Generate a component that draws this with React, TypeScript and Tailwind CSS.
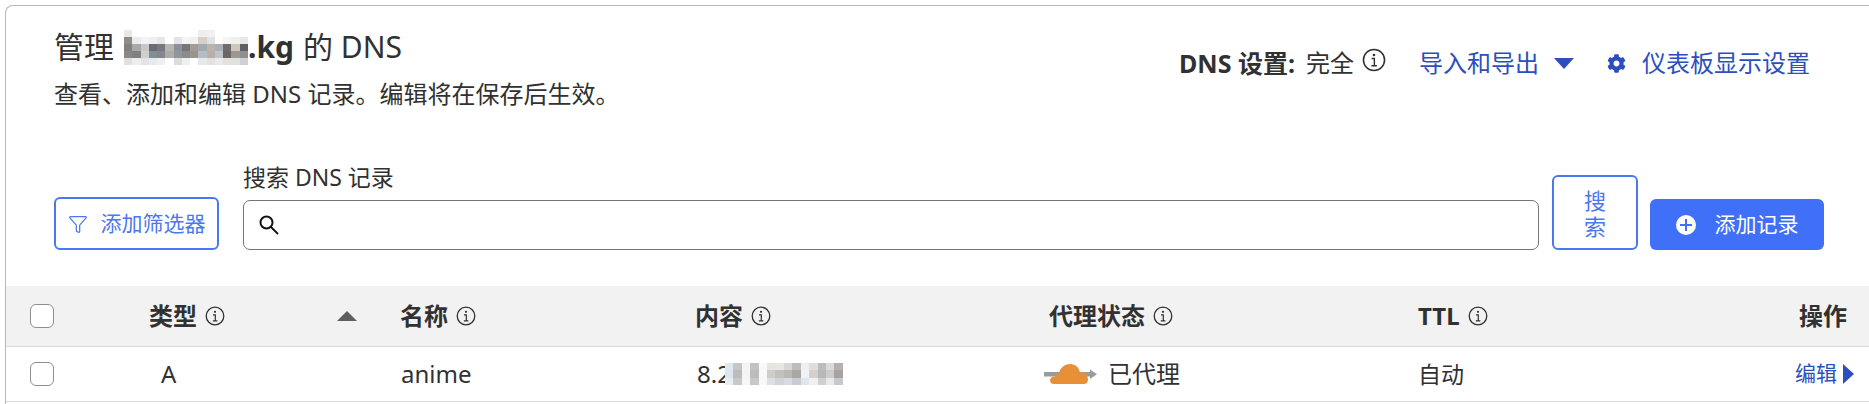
import { Filter } from "lucide-react"
import { FaCog } from "react-icons/fa"

const FONT = "font-['Noto_Sans','Noto_Sans_CJK_SC',sans-serif]"

const TITLE_MOSAIC = [
  "bg-[#e8e8e8]", "bg-white", "bg-white", "bg-white", "bg-white", "bg-white", "bg-white", "bg-white", "bg-white", "bg-[#f0eeec]", "bg-[#f2f0f0]", "bg-white", "bg-white", "bg-white", "bg-white",
  "bg-[#908c88]", "bg-[#e8ecf0]", "bg-[#f4f4f4]", "bg-[#eeeeee]", "bg-[#e6e6e6]", "bg-white", "bg-[#e4e4e4]", "bg-[#f4f4f4]", "bg-[#f0f0f0]", "bg-[#d6d0ca]", "bg-[#dfe2e6]", "bg-white", "bg-[#f4f4f4]", "bg-[#f0f0f0]", "bg-[#e8e8e8]",
  "bg-[#837f7b]", "bg-[#a8a8a8]", "bg-[#c8c8c6]", "bg-[#696d73]", "bg-[#757a80]", "bg-[#b8b6b2]", "bg-[#8b9099]", "bg-[#75767a]", "bg-[#a39c95]", "bg-[#a0a8b0]", "bg-[#bcb4ac]", "bg-[#aab0b8]", "bg-[#6f6d6b]", "bg-[#cfc7bd]", "bg-[#5d6065]",
  "bg-[#8a8884]", "bg-[#7e8084]", "bg-[#cfcfcb]", "bg-[#848c94]", "bg-[#84888e]", "bg-[#aeaca8]", "bg-[#8f96a0]", "bg-[#8c8c8e]", "bg-[#9b948c]", "bg-[#b4bcc4]", "bg-[#b8b0a8]", "bg-[#c0c4ca]", "bg-[#696765]", "bg-[#9c9890]", "bg-[#8f8f90]",
  "bg-[#e0e0e0]", "bg-[#eeeeee]", "bg-[#e4e4e4]", "bg-[#e8eaec]", "bg-[#f0f0f0]", "bg-white", "bg-[#dcdcdc]", "bg-[#f0f0f0]", "bg-white", "bg-[#e8e8e8]", "bg-[#e4e2e0]", "bg-[#e8eaec]", "bg-[#e4e0dc]", "bg-[#e0e0e0]", "bg-[#d0d0d0]",
]

const IP_MOSAIC = [
  "bg-[#dfe8f0]", "bg-[#c6c6c6]", "bg-[#f4f4f4]", "bg-[#c2c2c0]", "bg-[#f8f8f8]", "bg-[#e8e4e0]", "bg-[#e8e6e4]", "bg-[#d8d6d4]", "bg-[#c0bcba]", "bg-[#eef0f2]", "bg-[#e4dcd8]", "bg-[#bcbcbc]", "bg-[#d8dce0]", "bg-[#b6b0ae]",
  "bg-[#dde5ed]", "bg-[#bcbcbc]", "bg-[#f4f4f4]", "bg-[#bcbcbc]", "bg-[#f8f8f8]", "bg-[#d0ccc8]", "bg-[#c4c0bc]", "bg-[#bcb8b6]", "bg-[#aaa6a4]", "bg-[#f0f2f4]", "bg-[#d4d0ce]", "bg-[#b8b8b8]", "bg-[#d0cccc]", "bg-[#a8a2a0]",
  "bg-[#e8eef4]", "bg-[#c8c8c8]", "bg-[#f6f6f6]", "bg-[#c6c8ca]", "bg-[#f8f8f8]", "bg-[#dce0e4]", "bg-[#d0d4d8]", "bg-[#d8dce0]", "bg-[#c8ccd0]", "bg-[#e0e6ec]", "bg-[#f0f0f0]", "bg-[#d0d0d0]", "bg-[#e8eaec]", "bg-[#c8c8cc]",
]

const GRID_COLS = "grid grid-cols-[143px_251px_295px_354px_369px_1fr]"

function Mosaic({ cells, className }: { readonly cells: readonly string[]; readonly className: string }) {
  return (
    <span aria-hidden="true" className={className}>
      {cells.map((cell, i) => (
        <span key={i} className={cell} />
      ))}
    </span>
  )
}

function InfoIcon({ className }: { readonly className: string }) {
  return (
    <svg viewBox="0 0 20 20" fill="none" stroke="currentColor" aria-hidden="true" className={className}>
      <circle cx="10" cy="10" r="8.800" strokeWidth="1.300" />
      <circle cx="10" cy="5.800" r="1.100" fill="currentColor" stroke="none" />
      <path d="M8 8.800h2.300v6M7.800 14.800h4.600" strokeWidth="1.200" />
    </svg>
  )
}

function SearchIcon() {
  return (
    <svg viewBox="0 0 22 22" fill="none" stroke="#111" aria-hidden="true" className="h-[22px] w-[22px]">
      <circle cx="8.500" cy="8.500" r="6" strokeWidth="2" />
      <path d="M13 13l7 7" strokeWidth="1.800" />
    </svg>
  )
}

function HeaderCell({ label }: { readonly label: string }) {
  return (
    <div className="flex items-center gap-[8px] text-[24px] leading-[32px] font-bold">
      <span>{label}</span>
      <InfoIcon className="h-[20px] w-[20px] font-normal" />
    </div>
  )
}

function Checkbox() {
  return <span className="block h-[24px] w-[24px] rounded-[6px] border border-[#8f8f8f] bg-white" />
}

function ProxyCloud() {
  return (
    <svg width="54" height="24" viewBox="0 0 54 24" aria-hidden="true">
      <rect x="0" y="10" width="48" height="4.500" fill="#9b9b9b" />
      <path d="M46 7.500l7 4.700-7 4.700z" fill="#9b9b9b" />
      <path
        d="M10 22c-2.500 0-4-1.700-4-3.500 0-2.500 2.200-4.300 5-4 .6-1.500 2-2.500 3.500-2.200C16 6 20.500 2 26 2c5.500 0 9 3.500 10 8.500 1-.3 1.500-.3 2.500 0 3.300.6 5.500 3.800 5.500 7 0 2.500-1.500 4.500-4 4.500z"
        fill="#e89038"
      />
    </svg>
  )
}

export default function App() {
  return (
    <div className={`${FONT} h-[404px] overflow-hidden bg-white pl-[5px] pt-[5px] text-[#313131]`}>
      <div className="h-[420px] rounded-tl-[8px] border-l border-t border-[#b9b9b9]">
        <div className="flex items-start justify-between pl-[48px] pr-[59px] pt-[21px]">
          <div>
            <h1 className="flex items-center text-[30px] leading-[40px]">
              <span>管理</span>
              <Mosaic
                cells={TITLE_MOSAIC}
                className="ml-[10px] grid h-[35px] w-[124px] grid-cols-[repeat(15,1fr)] grid-rows-5"
              />
              <span className="font-bold">.kg</span>
              <span className="ml-[9px]">的 DNS</span>
            </h1>
            <p className="mt-[10px] text-[24px] leading-[34px]">查看、添加和编辑 DNS 记录。编辑将在保存后生效。</p>
          </div>
          <div className="mt-[20px] flex items-center text-[24px] leading-[32px]">
            <span className="text-[25px] font-bold">DNS 设置:</span>
            <span className="ml-[11px]">完全</span>
            <InfoIcon className="ml-[8px] h-[24px] w-[24px] -translate-y-[3px]" />
            <span className="ml-[33px] text-[#2c4fbd]">导入和导出</span>
            <span className="ml-[15px] h-0 w-0 border-x-[10px] border-t-[11px] border-x-transparent border-t-[#2c4fbd]" />
            <FaCog className="ml-[33px] h-[19px] w-[19px] text-[#2c4fbd]" />
            <span className="ml-[16px] text-[#2c4fbd]">仪表板显示设置</span>
          </div>
        </div>

        <div className="mt-[51px] flex items-end pl-[48px]">
          <button
            type="button"
            className="flex h-[53px] w-[165px] items-center justify-center gap-[13px] rounded-[6px] border-2 border-[#4a78f0] text-[21px] text-[#4a78f0]"
          >
            <Filter className="h-[20px] w-[20px]" strokeWidth={1.5} />
            添加筛选器
          </button>
          <div className="ml-[24px] w-[1296px]">
            <label className="block text-[23px] leading-[30px]">搜索 DNS 记录</label>
            <div className="mt-[8px] flex h-[50px] items-center rounded-[7px] border border-[#757575] pl-[14px]">
              <SearchIcon />
            </div>
          </div>
          <button
            type="button"
            className="ml-[13px] h-[75px] w-[86px] rounded-[6px] border-2 border-[#4a78f0] px-[20px] text-[22px] leading-[26px] text-[#4a78f0]"
          >
            搜索
          </button>
          <button
            type="button"
            className="ml-[12px] flex h-[51px] w-[174px] items-center justify-center gap-[19px] rounded-[6px] bg-[#4070f8] text-[21px] text-white"
          >
            <span className="relative block h-[20px] w-[20px] rounded-full bg-white">
              <span className="absolute left-[4px] top-[9px] h-[2px] w-[12px] bg-[#4070f8]" />
              <span className="absolute left-[9px] top-[4px] h-[12px] w-[2px] bg-[#4070f8]" />
            </span>
            添加记录
          </button>
        </div>

        <div className={`${GRID_COLS} mt-[36px] h-[61px] items-center border-b border-[#d9d9d9] bg-[#f2f2f2]`}>
          <div className="pl-[24px]">
            <Checkbox />
          </div>
          <div className="flex items-center justify-between pr-[43px]">
            <HeaderCell label="类型" />
            <span className="h-0 w-0 border-x-[10px] border-b-[10px] border-x-transparent border-b-[#5e5e5e]" />
          </div>
          <HeaderCell label="名称" />
          <HeaderCell label="内容" />
          <HeaderCell label="代理状态" />
          <div className="flex items-center justify-between pr-[22px]">
            <HeaderCell label="TTL" />
            <span className="text-[24px] font-bold">操作</span>
          </div>
        </div>

        <div className={`${GRID_COLS} h-[55px] items-center border-b border-[#d9d9d9] text-[24px]`}>
          <div className="pl-[24px]">
            <Checkbox />
          </div>
          <div className="pl-[12px]">A</div>
          <div className="pl-[1px]">anime</div>
          <div className="flex items-center pl-[2px]">
            <span>8.2</span>
            <Mosaic
              cells={IP_MOSAIC}
              className="-ml-[6px] grid h-[22px] w-[118px] grid-cols-[repeat(14,1fr)] grid-rows-3"
            />
          </div>
          <div className="-ml-[5px] flex items-center gap-[10px]">
            <ProxyCloud />
            <span>已代理</span>
          </div>
          <div className="flex items-center justify-between pr-[15px]">
            <span className="text-[23px]">自动</span>
            <span className="flex items-center gap-[6px] text-[21px] text-[#2c4fbd]">
              编辑
              <span className="h-0 w-0 border-y-[10px] border-l-[11px] border-y-transparent border-l-[#2c4fbd]" />
            </span>
          </div>
        </div>
      </div>
    </div>
  )
}
